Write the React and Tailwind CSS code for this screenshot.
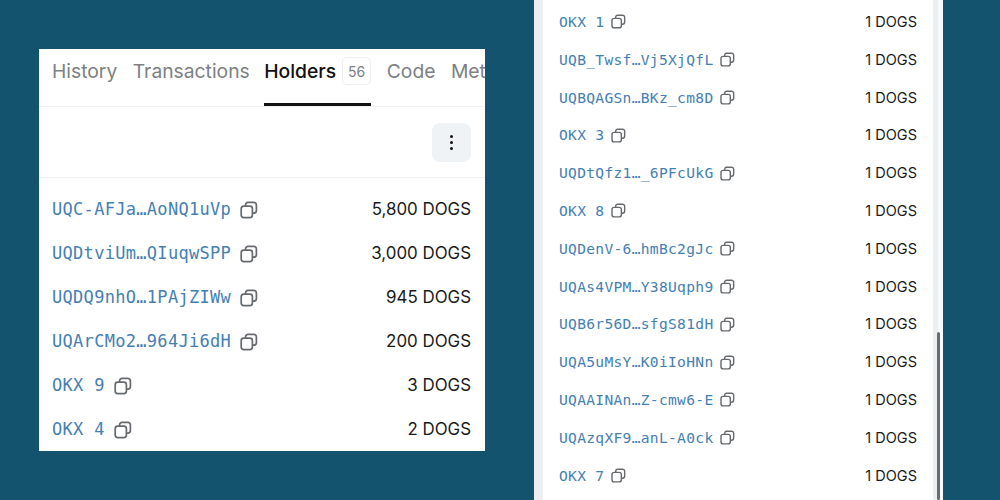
const mono = 'font-["DejaVu_Sans_Mono",monospace]'

const leftRows = [
  ['UQC-AFJa…AoNQ1uVp', '5,800 DOGS'],
  ['UQDtviUm…QIuqwSPP', '3,000 DOGS'],
  ['UQDQ9nhO…1PAjZIWw', '945 DOGS'],
  ['UQArCMo2…964Ji6dH', '200 DOGS'],
  ['OKX 9', '3 DOGS'],
  ['OKX 4', '2 DOGS'],
]

const rightRows = [
  'OKX 1',
  'UQB_Twsf…Vj5XjQfL',
  'UQBQAGSn…BKz_cm8D',
  'OKX 3',
  'UQDtQfz1…_6PFcUkG',
  'OKX 8',
  'UQDenV-6…hmBc2gJc',
  'UQAs4VPM…Y38Uqph9',
  'UQB6r56D…sfgS81dH',
  'UQA5uMsY…K0iIoHNn',
  'UQAAINAn…Z-cmw6-E',
  'UQAzqXF9…anL-A0ck',
  'OKX 7',
]

function CopyIcon({ size }) {
  return (
    <svg width={size} height={size} viewBox="0 0 18 18" fill="none" stroke="#666a6e" strokeWidth="1.7" className="shrink-0">
      <rect x="1.2" y="5.2" width="11.2" height="11.4" rx="2.6" />
      <path d="M5.6 5.2V3.8a2.4 2.4 0 0 1 2.4-2.4h5.8a2.6 2.6 0 0 1 2.6 2.6v5.6a2.6 2.6 0 0 1-2.6 2.6h-1.4" />
    </svg>
  )
}

export default function App() {
  return (
    <div className='w-[1000px] h-[500px] bg-[#14536e] flex items-start overflow-hidden font-["Inter",sans-serif]'>
      {/* Holders card */}
      <div className="w-[446px] h-[402px] ml-[39px] mt-[49px] bg-white overflow-hidden">
        <div className="h-[58px] border-b border-[#eef0f2] flex pl-[13px] gap-[15.5px] text-[19.3px] text-[#7d8083] whitespace-nowrap">
          <span className="pt-[8px]">History</span>
          <span className="pt-[8px]">Transactions</span>
          <div className="flex w-[107px] h-[57px] border-b-[3px] border-[#111] pt-[8px] gap-[6px] text-[#111] shrink-0 -ml-[1px]">
            <span className="font-medium">Holders</span>
            <span className="w-[30px] h-[28px] border border-[#eceef0] rounded-[5px] text-[14px] text-[#7d8083] flex items-center justify-center">56</span>
          </div>
          <span className="pt-[8px]">Code</span>
          <span className="pt-[8px]">Met</span>
        </div>
        <div className="h-[71px] border-b border-[#eef0f2] flex items-center justify-end pr-[14px]">
          <div className="w-[39px] h-[39px] rounded-[8px] bg-[#eff3f6] flex flex-col items-center justify-center gap-[3px]">
            <span className="w-[3px] h-[3px] rounded-full bg-[#111]" />
            <span className="w-[3px] h-[3px] rounded-full bg-[#111]" />
            <span className="w-[3px] h-[3px] rounded-full bg-[#111]" />
          </div>
        </div>
        <div className="pt-[10px]">
          {leftRows.map(([addr, amount]) => (
            <div key={addr} className="h-[44px] flex items-center justify-between pl-[13px] pr-[14px]">
              <div className="flex items-center gap-[9px]">
                <span className={`${mono} text-[17px] tracking-[0.3px] text-[#4580b3] whitespace-pre`}>{addr}</span>
                <CopyIcon size={18} />
              </div>
              <span className="text-[16.9px] text-[#1a1a1a]">{amount}</span>
            </div>
          ))}
        </div>
      </div>

      {/* Scrolled list card */}
      <div className="relative w-[409px] h-[500px] ml-[49px] bg-[#eceef0] pl-[9px] flex gap-[5px]">
        <div className="w-[390px] h-full bg-white pt-[3px] pl-[16px] pr-[16px]">
          {rightRows.map((addr) => (
            <div key={addr} className="h-[37.8px] flex items-center justify-between">
              <div className="flex items-center gap-[7px]">
                <span className={`${mono} text-[14.6px] tracking-[0.3px] text-[#4580b3] whitespace-pre`}>{addr}</span>
                <CopyIcon size={15} />
              </div>
              <span className="text-[14.5px] text-[#1a1a1a]">1 DOGS</span>
            </div>
          ))}
        </div>
        <div className="flex-1 bg-[#f8f9fa]" />
        {/* scrollbar thumb */}
        <div className="absolute right-[3px] top-[332px] w-[3px] h-[168px] rounded-full bg-[#6c6c6c]" />
      </div>
    </div>
  )
}
